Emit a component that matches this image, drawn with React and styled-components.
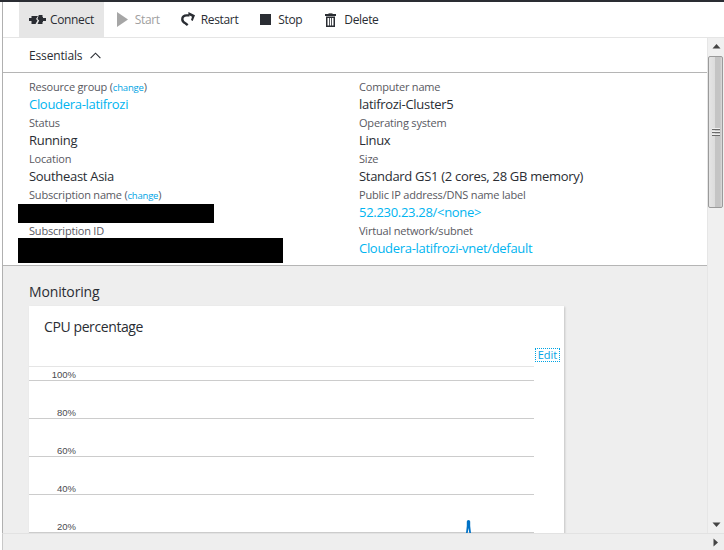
import React from 'react';
import styled, { createGlobalStyle } from 'styled-components';

const GlobalStyle = createGlobalStyle`
  html, body {
    margin: 0;
    padding: 0;
    background: #fff;
  }
  * {
    box-sizing: border-box;
  }
`;

const Page = styled.div`
  width: 724px;
  height: 550px;
  overflow: hidden;
  display: flex;
  flex-direction: column;
  border-top: 2px solid #2a2d33;
  font-family: "Open Sans", "Noto Sans", "Liberation Sans", sans-serif;
  color: #2a2d33;
`;

const Frame = styled.div`
  flex: 1;
  min-height: 0;
  display: flex;
  flex-direction: column;
  margin-left: 2px;
  border-left: 1px solid #b0b0b0;
`;

const Toolbar = styled.div`
  height: 36px;
  flex: none;
  display: flex;
  padding-left: 16px;
  border-bottom: 1px solid #e5e5e5;
`;

const ToolButton = styled.div`
  height: 35px;
  display: flex;
  align-items: center;
  gap: ${(p) => p.$gap || 7}px;
  margin-right: ${(p) => p.$after || 0}px;
  padding: ${(p) => p.$pad || '0'};
  background: ${(p) => (p.$active ? '#e6e6e6' : 'transparent')};
  color: ${(p) => (p.$disabled ? '#a0a0a0' : '#2a2d33')};
  font-size: 12px;
  letter-spacing: -0.35px;
`;

const Main = styled.div`
  flex: 1;
  min-height: 0;
  display: flex;
`;

const Content = styled.div`
  flex: 1;
  min-width: 0;
  display: flex;
  flex-direction: column;
  background: #eee;
`;

const Header = styled.div`
  height: 35px;
  flex: none;
  display: flex;
  align-items: center;
  gap: 8px;
  padding-left: 26px;
  background: #fff;
  border-bottom: 1px solid #b5b5b5;
  font-size: 12px;
  letter-spacing: -0.15px;
`;

const Essentials = styled.div`
  height: 193px;
  flex: none;
  display: grid;
  grid-template-columns: 330px 1fr;
  padding: 5px 0 0 26px;
  background: #fff;
  border-bottom: 1px solid #b5b5b5;
`;

const Column = styled.div`
  display: flex;
  flex-direction: column;
`;

const Label = styled.div`
  height: 18px;
  line-height: 18px;
  font-size: 11px;
  letter-spacing: -0.2px;
  color: #59595f;
  white-space: nowrap;
`;

const Change = styled.span`
  font-size: 9.5px;
  letter-spacing: -0.2px;
  color: #00a4e4;
`;

const Value = styled.div`
  height: 18px;
  line-height: 16px;
  font-size: 13px;
  letter-spacing: -0.3px;
  color: ${(p) => (p.$link ? '#00b4f0' : '#2a2d33')};
  white-space: nowrap;
`;

const Redaction = styled.div`
  width: ${(p) => p.$width}px;
  height: ${(p) => p.$height}px;
  margin: ${(p) => p.$margin};
  flex: none;
  background: #000;
`;

const Monitoring = styled.div`
  flex: 1;
  min-height: 0;
  overflow: hidden;
  padding: 16px 0 0 26px;
`;

const SectionTitle = styled.div`
  height: 24px;
  line-height: 20px;
  font-size: 14px;
  letter-spacing: -0.15px;
`;

const Card = styled.div`
  position: relative;
  width: 535px;
  height: 300px;
  background: #fff;
  box-shadow: 1px 1px 2px rgba(0, 0, 0, 0.18);
`;

const CardTitle = styled.div`
  height: 60px;
  padding: 11px 0 0 15px;
  line-height: 20px;
  font-size: 14px;
  letter-spacing: -0.4px;
`;

const EditLink = styled.div`
  position: absolute;
  top: 42px;
  left: 506px;
  width: 25px;
  height: 14px;
  border: 1px dotted #00a4e4;
  line-height: 12px;
  text-align: center;
  font-size: 11px;
  color: #00a4e4;
`;

const GridRow = styled.div`
  width: 505px;
  height: ${(p) => (p.$first ? 15 : 38)}px;
  display: flex;
  align-items: flex-end;
  border-top: ${(p) => (p.$first ? '1px solid #e5e5e5' : 'none')};
  border-bottom: 1px solid #ccc;
`;

const Tick = styled.span`
  width: 47px;
  text-align: right;
  font-family: "Liberation Sans", sans-serif;
  font-size: 9.5px;
  line-height: 11px;
  color: #4b4b50;
`;

const Plot = styled.svg`
  position: absolute;
  left: 437px;
  top: 214px;
`;

const VerticalBar = styled.div`
  width: 17px;
  flex: none;
  display: flex;
  flex-direction: column;
  background: #f0f0f0;
  border-left: 1px solid #e6e6e6;
`;

const ArrowCell = styled.div`
  height: ${(p) => p.$size || 17}px;
  width: ${(p) => p.$width || 'auto'};
  flex: none;
  display: flex;
  align-items: center;
  justify-content: center;
`;

const Thumb = styled.div`
  height: 152px;
  flex: none;
  margin: 1px 1px 0 0;
  display: flex;
  flex-direction: column;
  justify-content: center;
  align-items: center;
  gap: 1px;
  border: 1px solid #9a9a9a;
  border-radius: 2px;
  background: linear-gradient(90deg, #e4e4e4 0%, #dcdcdc 45%, #c4c4c4 50%, #c4c4c4 85%, #dcdcdc 100%);
`;

const Grip = styled.span`
  width: 8px;
  height: 2px;
  background: #6a6a6a;
  border-top: 1px solid #eee;
`;

const Spacer = styled.div`
  flex: 1;
`;

const HorizontalBar = styled.div`
  height: 17px;
  flex: none;
  display: flex;
  justify-content: flex-end;
  background: #eee;
  border-top: 1px solid #e2e2e2;
  border-left: 1px solid #c8c8c8;
  margin-left: -1px;
`;

const IconArt = styled.svg`
  display: block;
  flex: none;
  color: ${(p) => p.$color || '#2a2d33'};
`;

const ConnectIcon = () => (
  <IconArt width="17" height="9" viewBox="0 0 17 9">
    <path fill="currentColor" d="M0 3h2.500V1H9L7 4l1.500 1.500L6.500 9H2.500V6H0z" />
    <path fill="currentColor" d="M9.800 0h3.700v2h.5v1h3v3h-3v1h-.5v2H8.500L10.200 5.500 8.500 4z" />
  </IconArt>
);

const StartIcon = () => (
  <IconArt width="11" height="15" viewBox="0 0 11 15" $color="#a6a6a6">
    <path fill="currentColor" d="M0 0l11 7.500L0 15z" />
  </IconArt>
);

const RestartIcon = () => (
  <IconArt width="14" height="15" viewBox="0 0 14 15">
    <path fill="none" stroke="currentColor" strokeWidth="2.400" d="M8.500 3.400H5.600C3 3.400 1.300 5 1.300 7.200c0 2 1.400 3.400 3.400 4.300l2 1.700" />
    <path fill="currentColor" d="M7.400 0L14 3.300 11.700 9 10 8 11 4.700 7.400 2.800z" />
  </IconArt>
);

const StopIcon = () => (
  <IconArt width="11" height="11" viewBox="0 0 11 11">
    <rect width="11" height="11" fill="currentColor" />
  </IconArt>
);

const DeleteIcon = () => (
  <IconArt width="11" height="14" viewBox="0 0 11 14">
    <path fill="#7a7a7a" d="M3.500 0h4v1h-4z" />
    <path fill="currentColor" d="M0 1h11v2H0z" />
    <path fill="currentColor" fillRule="evenodd" d="M1 3.500h9V14H1zM2.500 5v7.500h1.500V5zM4.800 5v7.500h1.400V5zM7 5v7.500h1.500V5z" />
  </IconArt>
);

const ChevronUp = () => (
  <IconArt width="11" height="7" viewBox="0 0 11 7">
    <path fill="none" stroke="currentColor" strokeWidth="1.100" d="M.6 6.200l4.900-5 4.900 5" />
  </IconArt>
);

const Arrow = ({ points }) => (
  <IconArt width="9" height="9" viewBox="0 0 9 9" $color="#444">
    <polygon fill="currentColor" points={points} />
  </IconArt>
);

const leftFields = [
  { label: 'Status', value: 'Running' },
  { label: 'Location', value: 'Southeast Asia' },
];

const rightFields = [
  { label: 'Computer name', value: 'latifrozi-Cluster5' },
  { label: 'Operating system', value: 'Linux' },
  { label: 'Size', value: 'Standard GS1 (2 cores, 28 GB memory)' },
  { label: 'Public IP address/DNS name label', value: '52.230.23.28/<none>', link: true },
  { label: 'Virtual network/subnet', value: 'Cloudera-latifrozi-vnet/default', link: true },
];

const ticks = ['80%', '60%', '40%', '20%'];

const App = () => {
  return (
    <Page>
      <GlobalStyle />
      <Frame>
        <Toolbar>
          <ToolButton $active $pad="0 10px" $after={13} $gap={4}>
            <ConnectIcon />
            Connect
          </ToolButton>
          <ToolButton $disabled $after={21} $gap={7}>
            <StartIcon />
            Start
          </ToolButton>
          <ToolButton $after={22} $gap={6}>
            <RestartIcon />
            Restart
          </ToolButton>
          <ToolButton $after={23} $gap={7}>
            <StopIcon />
            Stop
          </ToolButton>
          <ToolButton $gap={8}>
            <DeleteIcon />
            Delete
          </ToolButton>
        </Toolbar>
        <Main>
          <Content>
            <Header>
              Essentials
              <ChevronUp />
            </Header>
            <Essentials>
              <Column>
                <Label>
                  Resource group (<Change>change</Change>)
                </Label>
                <Value $link>Cloudera-latifrozi</Value>
                {leftFields.map((f) => (
                  <React.Fragment key={f.label}>
                    <Label>{f.label}</Label>
                    <Value>{f.value}</Value>
                  </React.Fragment>
                ))}
                <Label>
                  Subscription name (<Change>change</Change>)
                </Label>
                <Redaction $width={196} $height={19} $margin="0 0 -1px -11px" />
                <Label>Subscription ID</Label>
                <Redaction $width={265} $height={25} $margin="-2px 0 0 -11px" />
              </Column>
              <Column>
                {rightFields.map((f) => (
                  <React.Fragment key={f.label}>
                    <Label>{f.label}</Label>
                    <Value $link={f.link}>{f.value}</Value>
                  </React.Fragment>
                ))}
              </Column>
            </Essentials>
            <Monitoring>
              <SectionTitle>Monitoring</SectionTitle>
              <Card>
                <CardTitle>CPU percentage</CardTitle>
                <EditLink>Edit</EditLink>
                <GridRow $first>
                  <Tick>100%</Tick>
                </GridRow>
                {ticks.map((t) => (
                  <GridRow key={t}>
                    <Tick>{t}</Tick>
                  </GridRow>
                ))}
                <Plot width="5" height="13" viewBox="0 0 5 13">
                  <path fill="#0072c6" d="M.8 1.500a1.700 1.500 0 0 1 3.400 0V6l.8 7H3.300L2.500 8 1.700 13H0l.8-7z" />
                </Plot>
              </Card>
            </Monitoring>
          </Content>
          <VerticalBar>
            <ArrowCell>
              <Arrow points="4.500,2 8.500,6.500 .5,6.500" />
            </ArrowCell>
            <Thumb>
              <Grip />
              <Grip />
              <Grip />
            </Thumb>
            <Spacer />
            <ArrowCell>
              <Arrow points=".5,2.500 8.500,2.500 4.500,7" />
            </ArrowCell>
          </VerticalBar>
        </Main>
        <HorizontalBar>
          <ArrowCell $size={16} $width="17px">
            <Arrow points="2.500,.5 7,4.500 2.500,8.500" />
          </ArrowCell>
        </HorizontalBar>
      </Frame>
    </Page>
  );
};

export default App;
